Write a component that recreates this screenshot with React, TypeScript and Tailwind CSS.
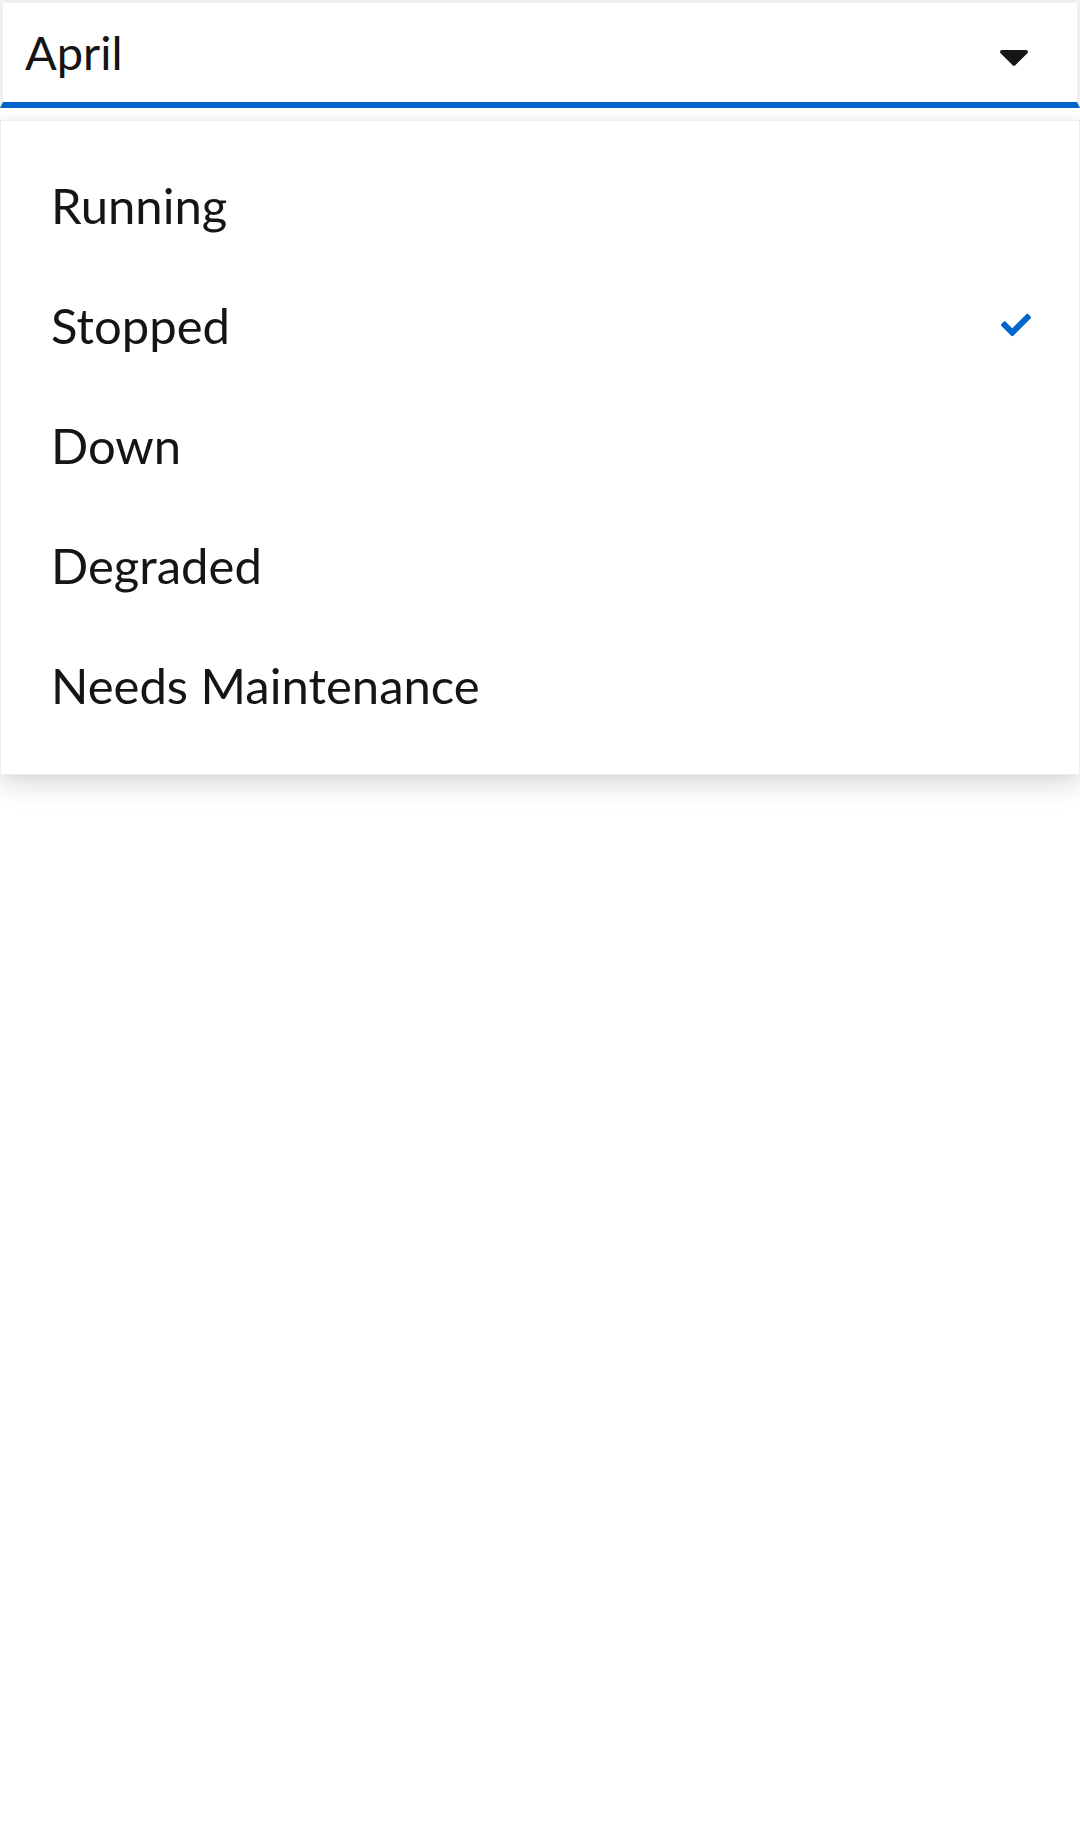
import React, { useState } from 'react';

const options = ['Running', 'Stopped', 'Down', 'Degraded', 'Needs Maintenance'];

const CaretDown = () => (
  <svg viewBox="0 0 320 512" className="w-[30px] h-[48px] fill-[#151515]" aria-hidden="true">
    <path d="M31.3 192h257.3c17.8 0 26.7 21.5 14.1 34.1L174.1 354.8c-7.8 7.8-20.5 7.8-28.3 0L17.2 226.1C4.6 213.5 13.5 192 31.3 192z" />
  </svg>
);

const Check = () => (
  <svg viewBox="0 0 512 512" className="w-[30px] h-[30px] fill-[#0066cc]" aria-hidden="true">
    <path d="M173.898 439.404l-166.4-166.4c-9.997-9.997-9.997-26.206 0-36.204l36.203-36.204c9.997-9.998 26.207-9.998 36.204 0L192 312.69 432.095 72.596c9.997-9.997 26.207-9.997 36.204 0l36.203 36.204c9.997 9.997 9.997 26.206 0 36.204l-294.4 294.401c-9.998 9.997-26.207 9.997-36.204-.001z" />
  </svg>
);

export default function App() {
  const [selected, setSelected] = useState('Stopped');

  return (
    <div className="w-full min-h-screen bg-white text-[#151515] font-['Lato',sans-serif] font-normal">
      {/* toggle */}
      <button
        type="button"
        className="w-full h-[108px] flex items-center pl-[22px] pr-[24px] border-[3px] border-[#f0f0f0] border-b-[6px] border-b-[#0066cc] bg-white"
      >
        <span className="flex-1 text-left text-[47px] leading-none">April</span>
        <span className="ml-[24px] mr-[24px] mt-[6px] flex items-center">
          <CaretDown />
        </span>
      </button>

      {/* menu */}
      <ul className="mt-[12px] w-full pt-[24px] pb-[29px] bg-white border border-[#ededed] shadow-[0_12px_24px_0_rgba(3,3,3,0.12),0_0_12px_0_rgba(3,3,3,0.06)]">
        {options.map((opt) => (
          <li key={opt}>
            <button
              type="button"
              onClick={() => setSelected(opt)}
              className="w-full h-[120px] flex items-center justify-between pl-[50px] pr-[48px] text-left"
            >
              <span className="text-[49px] leading-none">{opt}</span>
              {selected === opt && <Check />}
            </button>
          </li>
        ))}
      </ul>
    </div>
  );
}
